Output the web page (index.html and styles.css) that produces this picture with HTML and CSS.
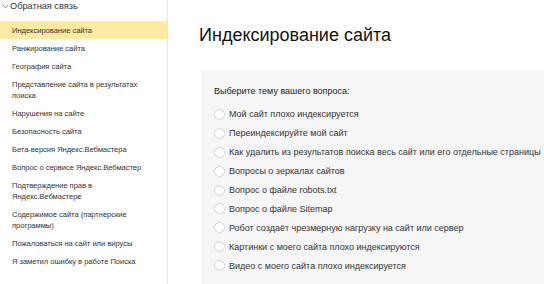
FILE: index.html
```html
<!DOCTYPE html>
<html lang="ru">
<head>
<meta charset="utf-8">
<link rel="stylesheet" href="styles.css">
</head>
<body>
<div class="page">
  <aside class="sidebar">
    <div class="group-title"><span class="chev"><svg width="7" height="5" viewBox="0 0 7 5"><path d="M0.5 0.8 L3.5 3.8 L6.5 0.8" fill="none" stroke="#777" stroke-width="0.9"/></svg></span>Обратная связь</div>
    <ul class="menu">
      <li class="item active">Индексирование сайта</li>
      <li class="item">Ранжирование сайта</li>
      <li class="item">География сайта</li>
      <li class="item">Представление сайта в результатах поиска</li>
      <li class="item">Нарушения на сайте</li>
      <li class="item">Безопасность сайта</li>
      <li class="item">Бета-версия Яндекс.Вебмастера</li>
      <li class="item">Вопрос о сервисе Яндекс.Вебмастер</li>
      <li class="item">Подтверждение прав в<br>Яндекс.Вебмастере</li>
      <li class="item">Содержимое сайта (партнерские программы)</li>
      <li class="item">Пожаловаться на сайт или вирусы</li>
      <li class="item">Я заметил ошибку в работе Поиска</li>
    </ul>
  </aside>
  <main class="content">
    <h1 class="title">Индексирование сайта</h1>
    <section class="panel">
      <p class="question">Выберите тему вашего вопроса:</p>
      <ul class="options">
        <li class="option"><span class="radio"></span>Мой сайт плохо индексируется</li>
        <li class="option"><span class="radio"></span>Переиндексируйте мой сайт</li>
        <li class="option"><span class="radio"></span>Как удалить из результатов поиска весь сайт или его отдельные страницы</li>
        <li class="option"><span class="radio"></span>Вопросы о зеркалах сайтов</li>
        <li class="option"><span class="radio"></span>Вопрос о файле robots.txt</li>
        <li class="option"><span class="radio"></span>Вопрос о файле Sitemap</li>
        <li class="option"><span class="radio"></span>Робот создаёт чрезмерную нагрузку на сайт или сервер</li>
        <li class="option"><span class="radio"></span>Картинки с моего сайта плохо индексируются</li>
        <li class="option"><span class="radio"></span>Видео с моего сайта плохо индексируется</li>
      </ul>
    </section>
  </main>
</div>
</body>
</html>
```

FILE: styles.css
```css
* { box-sizing: border-box; }
html, body { margin: 0; padding: 0; }
body {
  width: 544px;
  height: 284px;
  overflow: hidden;
  background: #fff;
  font-family: "Liberation Sans", Arial, sans-serif;
  color: #222;
}
.page {
  display: flex;
  height: 284px;
}
.sidebar {
  width: 168px;
  flex: none;
  border-right: 1px solid #e6e6e6;
  height: 284px;
}
.group-title {
  display: flex;
  align-items: center;
  height: 12px;
  padding-left: 2px;
  font-size: 9.2px;
  line-height: 12px;
  color: #333;
}
.chev { display: inline-flex; width: 8px; }
.menu {
  list-style: none;
  margin: 9px 0 0;
  padding: 0;
}
.item {
  padding: 3.5px 12px 3.5px 12px;
  font-size: 7.6px;
  letter-spacing: -0.05px;
  line-height: 11px;
  color: #333;
}
.item.active { background: #feeaa0; }
.content {
  flex: 1;
  min-width: 0;
  padding-left: 31px;
}
.title {
  margin: 24px 0 0;
  font-size: 18px;
  font-weight: normal;
  line-height: 22px;
  color: #111;
}
.panel {
  margin: 24px 0 0 2px;
  background: #f6f6f6;
  height: 214px;
  padding: 15px 0 0 13px;
}
.question {
  margin: 0;
  font-size: 9px;
  line-height: 12px;
  color: #222;
}
.options {
  list-style: none;
  margin: 8px 0 0;
  padding: 0;
}
.option {
  display: flex;
  align-items: center;
  height: 18.9px;
  font-size: 9px;
  color: #333;
  white-space: nowrap;
}
.radio {
  flex: none;
  width: 11px;
  height: 11px;
  border-radius: 50%;
  border: 1px solid #d3d3d3;
  background: #fff;
  margin-right: 4px;
}
```
